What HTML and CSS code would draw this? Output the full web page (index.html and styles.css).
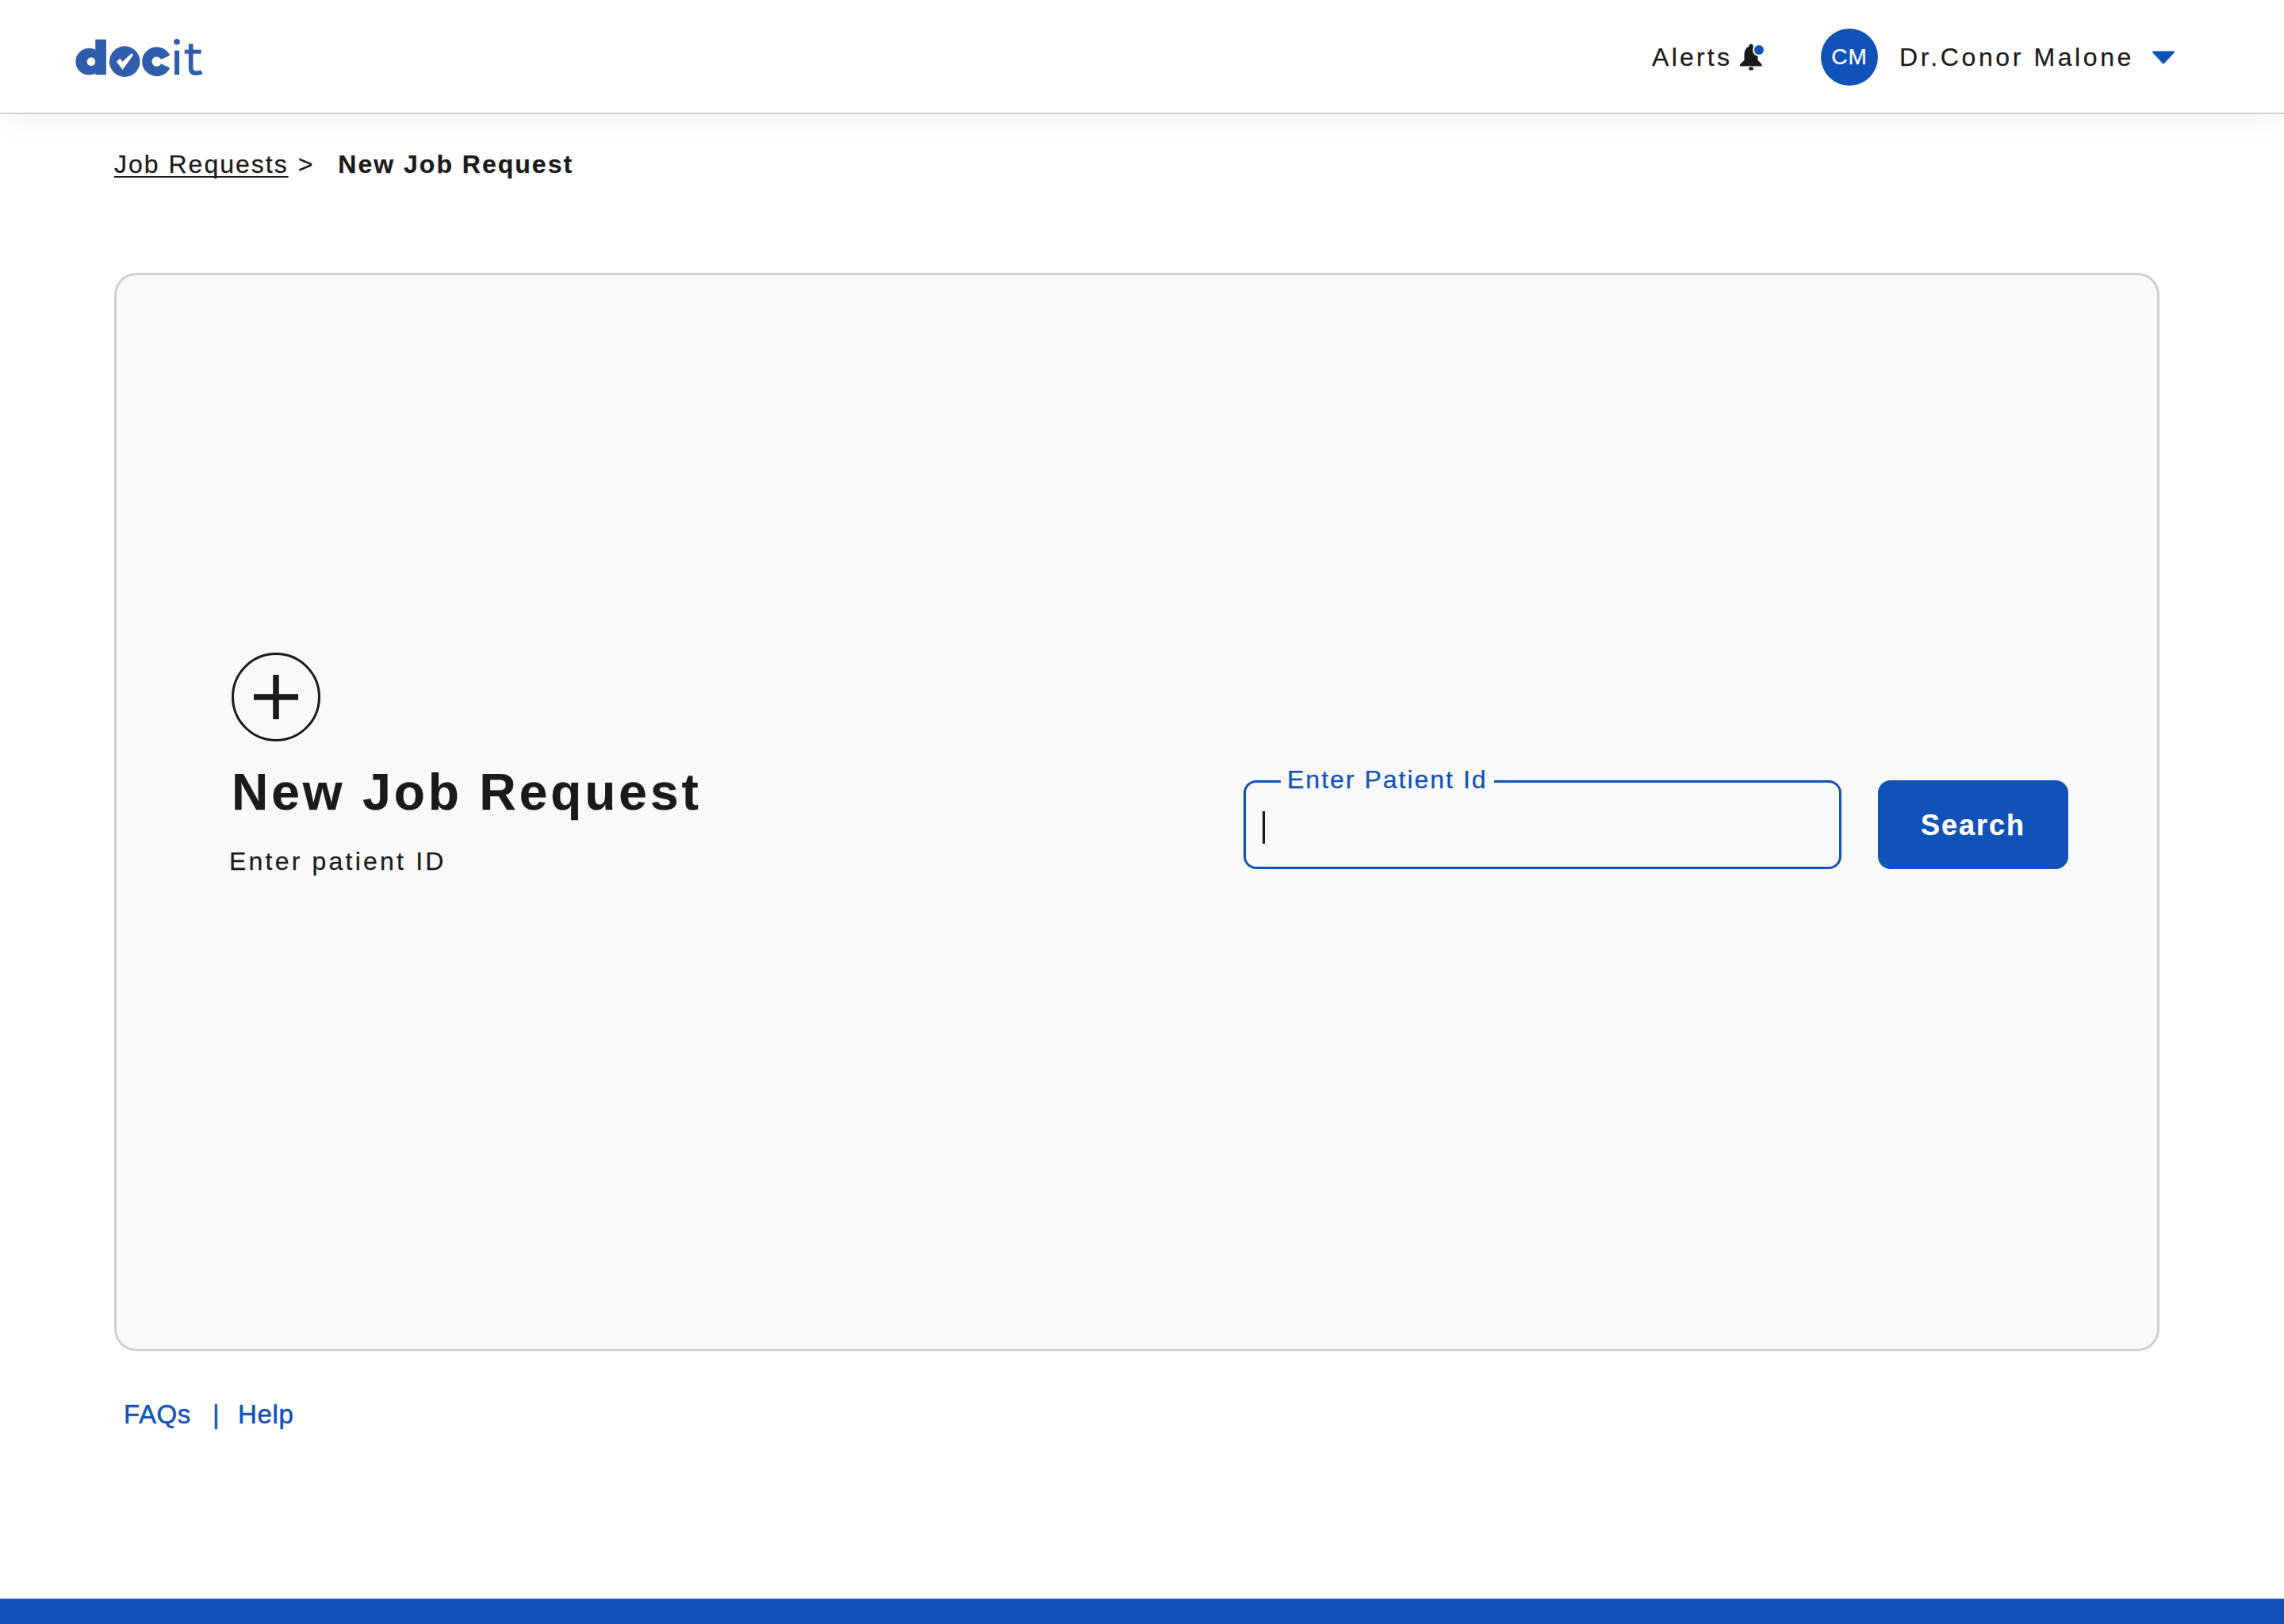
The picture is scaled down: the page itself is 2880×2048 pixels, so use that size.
FILE: index.html
```html
<!DOCTYPE html>
<html lang="en">
<head>
<meta charset="utf-8">
<title>New Job Request</title>
<link rel="stylesheet" href="styles.css">
</head>
<body>
<header class="topbar">
  <svg class="logo" viewBox="100 80 490 150" width="163" height="50" aria-label="docit">
    <circle cx="158" cy="172" r="51" fill="#2f5dac"/>
    <rect x="182" y="88" width="41" height="134" fill="#2f5dac"/>
    <circle cx="166" cy="172" r="16" fill="#fff"/>
    <circle cx="293" cy="172" r="58" fill="#2f5dac"/>
    <path d="M262 172 L275 160 L285 172 L320 140 L325 148 L285 203 Z" fill="#fff"/>
    <path d="M448 156 A37 37 0 1 0 448 188" fill="none" stroke="#2f5dac" stroke-width="37"/>
    <circle cx="491" cy="97" r="11.5" fill="#2f5dac"/>
    <rect x="482" y="130" width="18" height="92" fill="#2f5dac"/>
    <path d="M544 105 V196 Q544 216 564 216 Q576 216 585 211" fill="none" stroke="#2f5dac" stroke-width="17"/>
    <rect x="520" y="127" width="63" height="15" fill="#2f5dac"/>
  </svg>
  <nav class="usernav">
    <div class="alerts">
      <span class="alerts-label">Alerts</span>
      <svg class="bell" viewBox="0 0 31 34" width="31" height="34">
        <path d="M14 0.5 C15.6 0.5 16.6 1.8 16.6 3.5 C20.5 5 22.5 9 22.5 13.5 V21 L27.5 26 V28.5 H0 V26 L5.5 21 V13.5 C5.5 9 7.5 5 11.4 3.5 C11.4 1.8 12.4 0.5 14 0.5 Z" fill="#1a1a1a"/>
        <ellipse cx="14" cy="31.5" rx="3" ry="2" fill="#1a1a1a"/>
        <circle cx="24" cy="8" r="8" fill="#fff"/>
        <circle cx="24" cy="8" r="6" fill="#1052b8"/>
      </svg>
    </div>
    <div class="avatar">CM</div>
    <span class="username">Dr.Conor Malone</span>
    <svg class="caret-down" viewBox="0 0 30 17" width="30" height="17">
      <path d="M2 1.5 H28 L15 15.5 Z" fill="#1052b8" stroke="#1052b8" stroke-width="2" stroke-linejoin="round"/>
    </svg>
  </nav>
</header>

<main class="content">
  <div class="breadcrumb">
    <a class="crumb-link" href="#">Job Requests</a>
    <span class="crumb-sep">&gt;</span>
    <strong class="crumb-current">New Job Request</strong>
  </div>

  <section class="card">
    <div class="intro">
      <div class="plus-icon">
        <svg viewBox="0 0 56 56" width="56" height="56"><path d="M28 0 V56 M0 28 H56" stroke="#1a1a1a" stroke-width="7.5" fill="none"/></svg>
      </div>
      <h1 class="title">New Job Request</h1>
      <p class="subtitle">Enter patient ID</p>
    </div>
    <form class="search-form">
      <fieldset class="field">
        <legend class="field-label">Enter Patient Id</legend>
        <span class="text-caret"></span>
      </fieldset>
      <button class="search-btn" type="button">Search</button>
    </form>
  </section>

  <div class="links">
    <a class="link" href="#">FAQs</a>
    <span class="link-sep">|</span>
    <a class="link" href="#">Help</a>
  </div>
</main>

<footer class="bottombar"></footer>
</body>
</html>
```

FILE: styles.css
```css
* { box-sizing: border-box; }

html, body { margin: 0; padding: 0; }

body {
  min-height: 2048px;
  display: flex;
  flex-direction: column;
  background: #fff;
  color: #1a1a1a;
  font-family: "Liberation Sans", Arial, sans-serif;
  font-size: 32px;
  -webkit-text-stroke: 0.25px currentColor;
}

.topbar {
  height: 144px;
  flex: none;
  display: flex;
  align-items: center;
  justify-content: space-between;
  padding: 0 137px 0 93px;
  background: #fff;
  border-bottom: 2px solid #d2d2d2;
  box-shadow: 0 8px 32px rgba(0, 0, 0, 0.05);
}

.logo { display: block; margin-top: 1px; }

.usernav {
  display: flex;
  align-items: center;
  padding-top: 1px;
}

.alerts {
  display: flex;
  align-items: center;
  gap: 10px;
  margin-right: 71px;
  letter-spacing: 3.2px;
}

.alerts-label { line-height: 36px; }

.bell { display: block; overflow: visible; }

.avatar {
  width: 72px;
  height: 72px;
  border-radius: 50%;
  background: #1052b8;
  color: #fff;
  font-size: 28px;
  letter-spacing: 1px;
  display: flex;
  align-items: center;
  justify-content: center;
  margin-right: 27px;
}

.username {
  letter-spacing: 3.6px;
  margin-right: 22px;
  padding-top: 1px;
}

.caret-down { display: block; margin-top: 1px; }

.content {
  padding: 45px 157px 0 144px;
}

.breadcrumb {
  line-height: 36px;
  letter-spacing: 2px;
  display: flex;
  white-space: nowrap;
}

.crumb-link {
  color: #1a1a1a;
  text-decoration: underline;
  text-decoration-thickness: 2px;
  text-underline-offset: 4px;
  text-decoration-skip-ink: none;
}

.crumb-sep { margin-left: 12px; }

.crumb-current { margin-left: 30px; }

.card {
  margin-top: 119px;
  height: 1360px;
  padding: 476px 112px 0 143px;
  background: #f9f9f9;
  border: 3px solid #cfcfcf;
  border-radius: 28px;
  display: flex;
  justify-content: space-between;
  align-items: flex-start;
}

.plus-icon {
  width: 112px;
  height: 112px;
  margin-left: 2px;
  border: 3px solid #1a1a1a;
  border-radius: 50%;
  display: flex;
  align-items: center;
  justify-content: center;
}

.plus-icon svg { display: block; }

.title {
  margin: 28px 0 0 2px;
  font-size: 64px;
  line-height: 72px;
  font-weight: 700;
  letter-spacing: 3.95px;
  white-space: nowrap;
}

.subtitle {
  margin: 33px 0 0 -1px;
  line-height: 36px;
  letter-spacing: 3.2px;
}

.search-form {
  margin-top: 142px;
  display: flex;
  align-items: flex-end;
  gap: 46px;
}

.field {
  width: 754px;
  height: 131px;
  margin: 0;
  padding: 17px 0 0 21px;
  border: 3px solid #1052b8;
  border-radius: 16px;
  display: flex;
  align-items: flex-start;
}

.field-label {
  margin-left: 23px;
  padding: 0 8px 5px;
  color: #1052b8;
  line-height: 36px;
  letter-spacing: 2px;
  white-space: nowrap;
}

.text-caret {
  display: block;
  width: 3px;
  height: 41px;
  background: #1a1a1a;
}

.search-btn {
  width: 240px;
  height: 112px;
  padding: 1px 0 0;
  border: 0;
  border-radius: 16px;
  background: #1052b8;
  color: #fff;
  font-family: inherit;
  font-size: 36px;
  font-weight: 700;
  letter-spacing: 2px;
}

.links {
  margin-top: 60px;
  padding-left: 12px;
  display: flex;
  align-items: center;
  font-size: 33px;
  line-height: 40px;
  letter-spacing: 0.6px;
  color: #1052b8;
  -webkit-text-stroke-width: 0.5px;
}

.link { color: #1052b8; text-decoration: none; }

.link-sep { margin: 0 23px 0 27px; }

.bottombar {
  margin-top: auto;
  height: 32px;
  flex: none;
  background: #1052b8;
}
```
